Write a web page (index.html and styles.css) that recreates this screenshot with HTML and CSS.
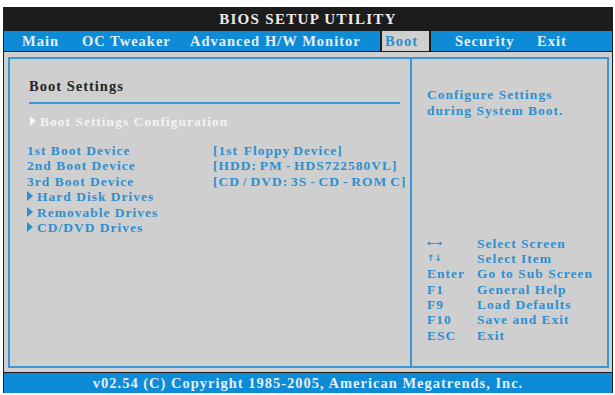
FILE: index.html
```html
<!DOCTYPE html>
<html lang="en">
<head>
    <meta charset="UTF-8">
    <title>BIOS SETUP UTILITY</title>
    <link rel="stylesheet" href="styles.css">
</head>
<body>
    <div class="bios">
        <div class="title">BIOS SETUP UTILITY</div>
        <div class="menu">
            <span class="menu-item m-main">Main</span>
            <span class="menu-item m-oc">OC Tweaker</span>
            <span class="menu-item m-adv">Advanced</span>
            <span class="menu-item m-hw">H/W Monitor</span>
            <span class="menu-item active">Boot</span>
            <span class="menu-item m-sec">Security</span>
            <span class="menu-item m-exit">Exit</span>
        </div>

        <div class="body">
            <div class="panel">
                <div class="left">
                    <div class="section-title">Boot Settings</div>
                    <div class="rule"></div>
                    <div class="sub white"><span class="tri"></span>Boot Settings Configuration</div>

                    <div class="rows">
                        <div class="row"><span class="label">1st Boot Device</span><span class="value">[1st&nbsp; Floppy Device]</span></div>
                        <div class="row"><span class="label">2nd Boot Device</span><span class="value">[HDD: PM - HDS722580VL]</span></div>
                        <div class="row"><span class="label">3rd Boot Device</span><span class="value">[CD / DVD: 3S - CD - ROM C]</span></div>
                        <div class="row"><span class="label"><span class="tri"></span>Hard Disk Drives</span></div>
                        <div class="row"><span class="label"><span class="tri"></span>Removable Drives</span></div>
                        <div class="row"><span class="label"><span class="tri"></span>CD/DVD Drives</span></div>
                    </div>
                </div>

                <div class="right">
                    <div class="help-text">Configure Settings<br>during System Boot.</div>

                    <div class="keys">
                        <div class="key-row"><span class="key arrows">&larr;&rarr;</span><span>Select Screen</span></div>
                        <div class="key-row"><span class="key arrows">&uarr;&darr;</span><span>Select Item</span></div>
                        <div class="key-row"><span class="key">Enter</span><span>Go to Sub Screen</span></div>
                        <div class="key-row"><span class="key">F1</span><span>General Help</span></div>
                        <div class="key-row"><span class="key">F9</span><span>Load Defaults</span></div>
                        <div class="key-row"><span class="key">F10</span><span>Save and Exit</span></div>
                        <div class="key-row"><span class="key">ESC</span><span>Exit</span></div>
                    </div>
                </div>
            </div>
        </div>

        <div class="footer">v02.54 (C) Copyright 1985-2005, American Megatrends, Inc.</div>
    </div>
</body>
</html>
```

FILE: styles.css
```css
* {
    margin: 0;
    padding: 0;
    box-sizing: border-box;
}
body {
    background-color: #fff;
    font-family: "Liberation Serif", "Times New Roman", serif;
    font-weight: bold;
}
.bios {
    margin: 7px 0 0 3px;
    width: 610px;
    height: 386px;
    background-color: #1c1c1c;
    padding: 0 1px 0 1px;
    display: flex;
    flex-direction: column;
}
.title {
    height: 24px;
    line-height: 25px;
    text-align: center;
    color: #ececec;
    font-size: 15px;
    letter-spacing: 1.3px;
}

/* menu bar: fixed slots so each tab starts where the original does */
.menu {
    height: 21px;
    display: flex;
    align-items: stretch;
    padding-left: 18px;
    background-color: #0d8bd6;
    border-bottom: 1px solid #1c1c1c;
}
.menu-item {
    color: #e4eef6;
    font-size: 14.5px;
    letter-spacing: 1px;
    line-height: 20px;
    white-space: nowrap;
}
.m-main { width: 60px; }
.m-oc { width: 108px; }
.m-adv { width: 75px; }
.m-hw { width: 115px; }
.menu-item.active {
    width: 51px;
    padding-left: 3px;
    background-color: #cfcfcf;
    color: #2b8fd0;
    border-left: 2px solid #1c1c1c;
    border-right: 2px solid #1c1c1c;
}
.m-sec {
    margin-left: 24px;
    width: 82px;
}
.body {
    flex: 1;
    background-color: #cfcfcf;
    padding: 5px 3px 4px 4px;
    display: flex;
}
.panel {
    flex: 1;
    display: flex;
    border: 2px solid #3a98d6;
}
.left {
    width: 402px;
    flex-shrink: 0;
    border-right: 2px solid #3a98d6;
    padding-left: 17px;
    color: #2e8fcf;
    font-size: 13.5px;
    letter-spacing: 1px;
}
.section-title {
    margin: 18px 0 0 2px;
    line-height: 18px;
    font-size: 14.5px;
    color: #262626;
}
.rule {
    margin: 7px 10px 0 2px;
    height: 2px;
    background-color: #3a98d6;
}
.sub {
    margin-top: 10px;
    padding-left: 3px;
    line-height: 16px;
}
.white {
    color: #f4f4f4;
}
.tri {
    display: inline-block;
    width: 0;
    height: 0;
    margin-right: 4px;
    border-left: 6px solid currentColor;
    border-top: 5px solid transparent;
    border-bottom: 5px solid transparent;
}
.rows {
    margin-top: 13px;
}
.row {
    display: flex;
    line-height: 15.4px;
}
.label {
    width: 186px;
    flex-shrink: 0;
}
.value {
    white-space: nowrap;
    word-spacing: -1.5px;
}
.right {
    flex: 1;
    display: flex;
    flex-direction: column;
    color: #2e8fcf;
    font-size: 13.5px;
    letter-spacing: 1px;
}
.help-text {
    margin: 28px 0 0 15px;
    line-height: 16px;
}
.keys {
    margin: auto 0 23px 15px;
}
.key-row {
    display: flex;
    line-height: 15.35px;
}
.key {
    width: 50px;
}
.arrows {
    font-family: "DejaVu Sans", sans-serif;
    font-size: 9px;
    letter-spacing: 0;
}
.footer {
    height: 21px;
    line-height: 21px;
    border-top: 1px solid #1c1c1c;
    background-color: #0d8bd6;
    color: #e4eef6;
    text-align: center;
    font-size: 14.5px;
    letter-spacing: 1px;
}
```
